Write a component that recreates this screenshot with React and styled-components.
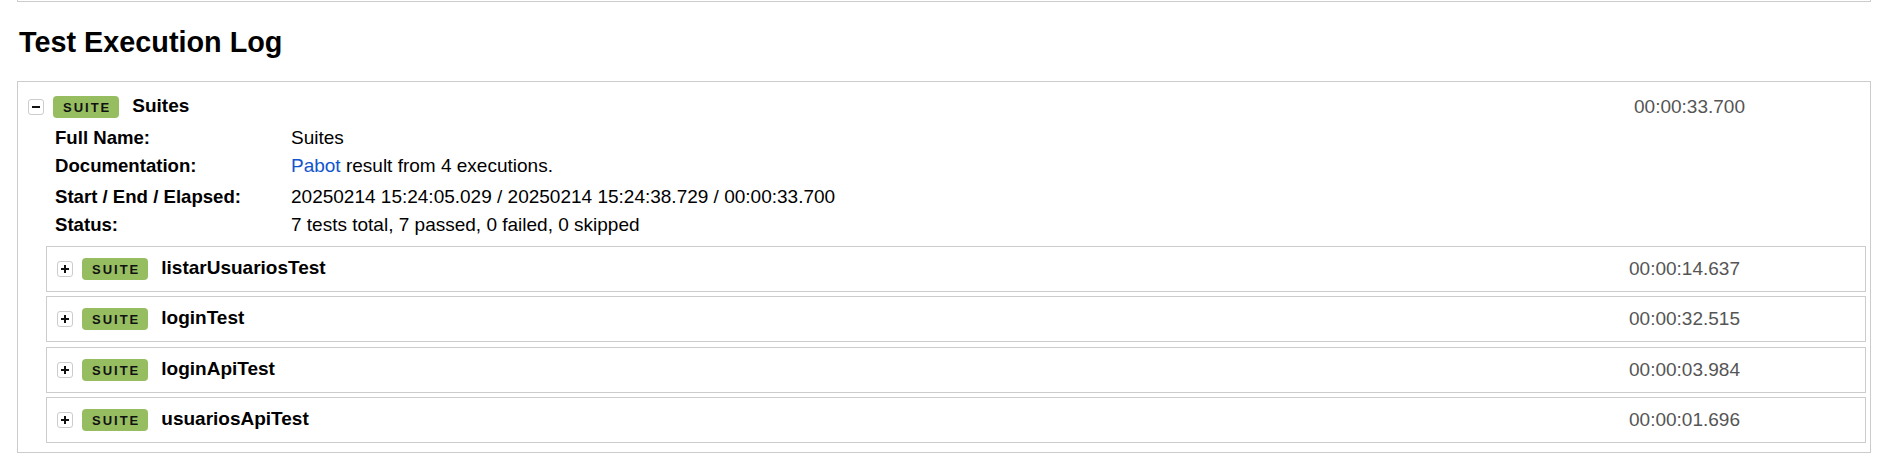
import React from "react";
import styled, { createGlobalStyle } from "styled-components";

const GlobalStyle = createGlobalStyle`
  html, body { margin: 0; padding: 0; background: #fff; }
  body {
    font-family: "Liberation Sans", Arial, Helvetica, sans-serif;
    font-size: 19px;
    color: #000;
  }
`;

const Page = styled.div`
  padding: 0 12px 16px 17px;
`;

const PrevBox = styled.div`
  height: 1px;
  border: 1px solid #ccc;
  border-top: none;
`;

const Heading = styled.h2`
  margin: 23px 0 22px 2px;
  font-size: 28.8px;
  line-height: 34px;
  font-weight: bold;
`;

const Element = styled.div`
  border: 1px solid #ccc;
  background: #fff;
`;

const Header = styled.div`
  display: flex;
  align-items: center;
  height: ${(p) => (p.$main ? "32px" : "44px")};
  padding: ${(p) => (p.$main ? "9px" : "0")} 0 0 10px;
`;

const Toggle = styled.span`
  display: inline-flex;
  align-items: center;
  justify-content: center;
  box-sizing: border-box;
  width: 16px;
  height: 16px;
  border: 1px solid #ccc;
  border-radius: 3px;
  background: #fff;
  flex: none;
`;

const Badge = styled.span`
  display: inline-block;
  height: 22px;
  line-height: 23px;
  margin-left: 9px;
  padding: 0 8px 0 10px;
  border-radius: 4px;
  background: #97bd61;
  color: #111;
  font-size: 13px;
  font-weight: bold;
  letter-spacing: 2px;
  flex: none;
`;

const Name = styled.span`
  margin-left: 13px;
  margin-bottom: 2px;
  font-weight: bold;
  font-size: 19px;
`;

const Elapsed = styled.span`
  margin-left: auto;
  padding-right: 125px;
  color: #555;
  font-size: 19px;
`;

const Metadata = styled.div`
  margin: 1px 0 0 37px;
`;

const MetaRow = styled.div`
  display: grid;
  grid-template-columns: 236px 1fr;
  align-items: baseline;
  height: ${(p) => (p.$tall ? "31px" : "28px")};
  line-height: 28px;
`;

const MetaLabel = styled.span`
  font-weight: bold;
  font-size: 18.6px;
`;

const MetaValue = styled.span`
  font-size: 19px;
`;

const Link = styled.a`
  color: #1155cc;
  text-decoration: none;
`;

const Children = styled.div`
  display: flex;
  flex-direction: column;
  gap: 4.33px;
  margin: 7px 4px 0 28px;
  padding-bottom: 9px;
`;

const Sign = ({ plus }) => (
  <svg width="10" height="10" viewBox="0 0 10 10">
    <rect x="1" y="4" width="8" height="2" fill="#111" />
    {plus && <rect x="4" y="1" width="2" height="8" fill="#111" />}
  </svg>
);

const SuiteHeader = ({ name, elapsed, main, open }) => (
  <Header $main={main}>
    <Toggle>
      <Sign plus={!open} />
    </Toggle>
    <Badge>SUITE</Badge>
    <Name>{name}</Name>
    <Elapsed>{elapsed}</Elapsed>
  </Header>
);

const children = [
  { name: "listarUsuariosTest", elapsed: "00:00:14.637" },
  { name: "loginTest", elapsed: "00:00:32.515" },
  { name: "loginApiTest", elapsed: "00:00:03.984" },
  { name: "usuariosApiTest", elapsed: "00:00:01.696" },
];

export default function App() {
  return (
    <>
      <GlobalStyle />
      <Page>
        <PrevBox />
        <Heading>Test Execution Log</Heading>
        <Element>
          <SuiteHeader name="Suites" elapsed="00:00:33.700" main open />
          <Metadata>
            <MetaRow>
              <MetaLabel>Full Name:</MetaLabel>
              <MetaValue>Suites</MetaValue>
            </MetaRow>
            <MetaRow $tall>
              <MetaLabel>Documentation:</MetaLabel>
              <MetaValue>
                <Link href="#">Pabot</Link> result from 4 executions.
              </MetaValue>
            </MetaRow>
            <MetaRow>
              <MetaLabel>Start / End / Elapsed:</MetaLabel>
              <MetaValue>
                20250214 15:24:05.029 / 20250214 15:24:38.729 / 00:00:33.700
              </MetaValue>
            </MetaRow>
            <MetaRow>
              <MetaLabel>Status:</MetaLabel>
              <MetaValue>7 tests total, 7 passed, 0 failed, 0 skipped</MetaValue>
            </MetaRow>
          </Metadata>
          <Children>
            {children.map((c) => (
              <Element key={c.name}>
                <SuiteHeader name={c.name} elapsed={c.elapsed} />
              </Element>
            ))}
          </Children>
        </Element>
      </Page>
    </>
  );
}
